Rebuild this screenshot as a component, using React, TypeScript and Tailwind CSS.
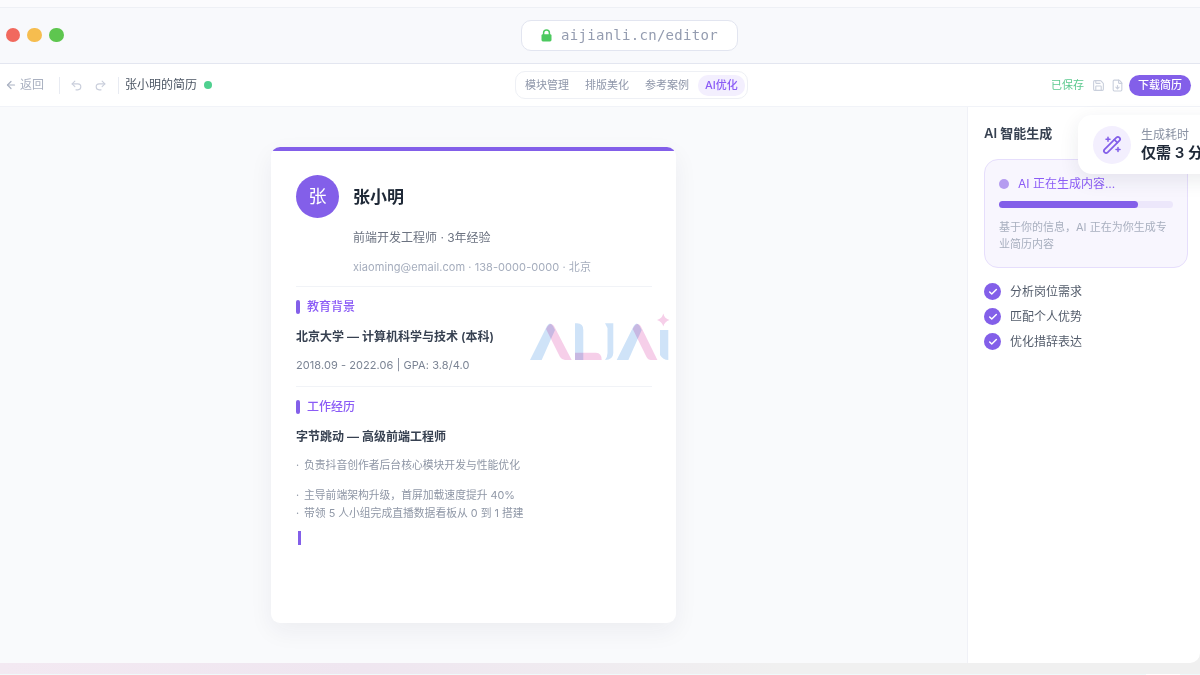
import React from "react";
import { ArrowLeft, Undo2, Redo2, Save, FileDown, Check } from "lucide-react";

const Logo = () => (
  <svg width="140" height="53" viewBox="0 -3 140 53" fill="none">
    <g className="mix-blend-multiply">
      <path d="M0 45 L17 11 Q20 6 23 11 L25 15 L11.7 45 Z" fill="#cfe3f8" />
      <path d="M16 14 Q20 6 24 11 L41.7 45 H35 Q32 45 30 42 Z" fill="#f6cfe9" className="mix-blend-multiply" />
      <path d="M45 8.3 H47 Q53.3 8.3 53.3 15 V45 H45 Z" fill="#cfe3f8" />
      <path d="M45 37.7 H66 Q71.7 38 71.7 45 H45 Z" fill="#f6cfe9" className="mix-blend-multiply" />
      <path d="M75 8.3 H83.3 V38 Q83 45 75 45 Q77.5 42 77.5 38 V13 Z" fill="#cfe3f8" />
      <path d="M86.7 45 L103.7 11 Q106.7 6 109.7 11 L111.7 15 L98.4 45 Z" fill="#cfe3f8" />
      <path d="M102.7 14 Q106.7 6 110.7 11 L127.4 45 H121 Q118 45 116.5 42 Z" fill="#f6cfe9" className="mix-blend-multiply" />
      <path d="M130 15 H138.3 V45 Q133 45 130 40 Z" fill="#cfe3f8" />
      <path d="M133.3 -1.5 Q134.5 3.5 139.5 5 Q134.5 6.5 133.3 11.5 Q132 6.5 127 5 Q132 3.5 133.3 -1.5 Z" fill="#f6cfe9" />
    </g>
  </svg>
);

const Wand = () => (
  <svg width="22" height="22" viewBox="0 0 22 22" fill="none" stroke="#835fe9" strokeWidth="1.7" strokeLinejoin="round" strokeLinecap="round">
    <rect x="0.5" y="8.8" width="21" height="4.4" rx="2.2" transform="rotate(-45 11 11)" />
    <path d="M13.3 5.6 L16.4 8.7" />
    <path d="M7 3.2 V7.2 M5 5.2 H9" strokeWidth="1.5" />
    <path d="M17 13.4 V17.4 M15 15.4 H19" strokeWidth="1.5" />
  </svg>
);

const LockIcon = () => (
  <svg width="11" height="13" viewBox="0 0 11 13" fill="none">
    <path d="M2.6 6 V3.8 a2.9 2.9 0 0 1 5.8 0 V6" stroke="#4cc95f" strokeWidth="1.5" />
    <rect x="0.5" y="5.2" width="10" height="7.3" rx="1.4" fill="#4cc95f" />
  </svg>
);

const Tab = ({ children, active }: { children: React.ReactNode; active?: boolean }) => (
  <div
    className={
      active
        ? "h-[21px] px-[7px] rounded-[10px] bg-[#f3effe] text-[#8b5cf6] text-[11px] font-medium flex items-center"
        : "h-[21px] px-[7px] text-[#8f97aa] text-[11px] flex items-center"
    }
  >
    {children}
  </div>
);

const Step = ({ label }: { label: string }) => (
  <div className="flex items-center gap-[9px] h-[25px]">
    <div className="w-[17px] h-[17px] rounded-full bg-[#835fe9] flex items-center justify-center">
      <Check size={10} color="#fff" strokeWidth={3.5} />
    </div>
    <span className="text-[12px] text-[#535c6b]">{label}</span>
  </div>
);

const SectionTitle = ({ children }: { children: React.ReactNode }) => (
  <div className="flex items-center gap-[7px] h-[16px]">
    <div className="w-[4px] h-[14px] rounded-[2px] bg-[#835fe9]" />
    <span className="text-[12px] font-medium text-[#8b5cf6]">{children}</span>
  </div>
);

const Bullet = ({ children }: { children: React.ReactNode }) => (
  <div className="flex text-[10.8px] leading-[18px] text-[#8f97a6]">
    <span className="w-[8px] shrink-0">·</span>
    <span>{children}</span>
  </div>
);

export default function App() {
  return (
    <div
      className="relative w-[1200px] h-[675px] overflow-hidden flex flex-col bg-[#fbfbfd] text-[#1f2937]"
      style={{ fontFamily: "Inter, 'Noto Sans CJK SC', sans-serif" }}
    >
      <div className="h-[7px] shrink-0 bg-[#fbfbfd] border-b border-[#eef0f5] box-content" />
      <div className="h-[55px] shrink-0 bg-[#f8f9fc] border-b border-[#e3e6f0] box-content flex items-center relative">
        <div className="flex items-center gap-[7.3px] pl-[5.5px] pb-[1px]">
          <div className="w-[14.5px] h-[14.5px] rounded-full bg-[#f1695e]" />
          <div className="w-[14.5px] h-[14.5px] rounded-full bg-[#f6bd4f]" />
          <div className="w-[14.5px] h-[14.5px] rounded-full bg-[#5ec64f]" />
        </div>
        <div className="absolute left-[521px] top-[12px] w-[217px] h-[31px] rounded-[10px] bg-white border border-[#e2e5f0] flex items-center justify-center gap-[9px]">
          <LockIcon />
          <span className="text-[14px] tracking-[0.02em] text-[#949cb0]" style={{ fontFamily: "'DejaVu Sans Mono', monospace" }}>
            aijianli.cn/editor
          </span>
        </div>
      </div>

      <div className="h-[42px] shrink-0 bg-white border-b border-[#f1f3f8] box-content flex items-center relative">
        <div className="flex items-center pl-[5px]">
          <ArrowLeft size={12} color="#aab1c2" strokeWidth={2.4} />
          <span className="ml-[3px] text-[12px] text-[#a9b0c0]">返回</span>
          <div className="ml-[15px] w-px h-[17px] bg-[#e8ebf2]" />
          <Undo2 size={13} color="#c9cedb" className="ml-[10px]" />
          <Redo2 size={13} color="#c9cedb" className="ml-[11px]" />
          <div className="ml-[11px] w-px h-[17px] bg-[#e8ebf2]" />
          <span className="ml-[6px] text-[12px] text-[#4b5563]">张小明的简历</span>
          <div className="ml-[7px] w-[8px] h-[8px] rounded-full bg-[#4fd08f]" />
        </div>
        <div className="absolute left-[515px] top-[7px] w-[233px] h-[28px] rounded-[10px] border border-[#eef0f5] bg-white flex items-center pl-[2px] gap-[2px]">
          <Tab>模块管理</Tab>
          <Tab>排版美化</Tab>
          <Tab>参考案例</Tab>
          <Tab active>AI优化</Tab>
        </div>
        <div className="ml-auto flex items-center pr-[9px]">
          <span className="text-[11px] text-[#5cc98f]">已保存</span>
          <Save size={13} color="#c9cfdc" className="ml-[8px]" />
          <FileDown size={13} color="#c9cfdc" className="ml-[6px]" />
          <div className="ml-[5px] w-[62px] h-[21px] rounded-full bg-[#835fe9] text-white text-[11px] font-medium flex items-center justify-center">
            下载简历
          </div>
        </div>
      </div>

      <div className="h-[556px] shrink-0 flex bg-[#f0f0f0]">
        <div className="w-[967px] bg-[#f9fafc] pt-[40px] pl-[271px]">
          <div className="relative w-[405px] h-[476px] bg-white rounded-[9px] overflow-hidden shadow-[0_8px_24px_rgba(30,40,70,0.06)]">
            <div className="h-[4px] bg-[#835fe9]" />
            <div className="pl-[25px] pr-[24px] pt-[24px]">
              <div className="flex items-center gap-[14px]">
                <div className="w-[43px] h-[43px] rounded-full bg-[#835fe9] text-white text-[18px] flex items-center justify-center">张</div>
                <span className="pt-[2px] text-[17px] font-semibold text-[#1f2937]">张小明</span>
              </div>
              <div className="pl-[57px] mt-[11px] text-[12px] leading-[18px] text-[#6b7280]">前端开发工程师 · 3年经验</div>
              <div className="pl-[57px] mt-[12px] text-[11px] leading-[16px] tracking-[0.07px] text-[#a5adbd]">xiaoming@email.com · 138-0000-0000 · 北京</div>
              <div className="mt-[11px] h-px bg-[#f1f3f7]" />
              <div className="mt-[12px]"><SectionTitle>教育背景</SectionTitle></div>
              <div className="mt-[13px] text-[12px] leading-[18px] font-semibold text-[#374151]">北京大学 — 计算机科学与技术 (本科)</div>
              <div className="mt-[11px] text-[11px] leading-[16px] tracking-[0.07px] text-[#7b8494]">2018.09 - 2022.06 | GPA: 3.8/4.0</div>
              <div className="mt-[13px] h-px bg-[#f1f3f7]" />
              <div className="mt-[12px]"><SectionTitle>工作经历</SectionTitle></div>
              <div className="mt-[13px] text-[12px] leading-[18px] font-semibold text-[#374151]">字节跳动 — 高级前端工程师</div>
              <div className="mt-[11px]"><Bullet>负责抖音创作者后台核心模块开发与性能优化</Bullet></div>
              <div className="mt-[12px]"><Bullet>主导前端架构升级，首屏加载速度提升 40%</Bullet></div>
              <Bullet>带领 5 人小组完成直播数据看板从 0 到 1 搭建</Bullet>
              <div className="mt-[8px] ml-[2px] w-[3px] h-[14px] bg-[#835fe9]" />
            </div>
            <div className="absolute left-[259px] top-[165px]"><Logo /></div>
          </div>
        </div>
        <div className="flex-1 bg-white border-l border-[#f0f1f7] rounded-br-[10px] pl-[16px] pr-[12px] pt-[18px]">
          <div className="text-[13px] leading-[16px] font-semibold text-[#374151]">AI 智能生成</div>
          <div className="mt-[18px] h-[109px] rounded-[14px] border border-[#e6defc] bg-[#f8f6fe] px-[14px] pt-[16px]">
            <div className="flex items-center gap-[9px]">
              <div className="w-[10px] h-[10px] rounded-full bg-[#b59cf0]" />
              <span className="text-[12px] leading-[16px] text-[#8b5cf6]">AI 正在生成内容...</span>
            </div>
            <div className="mt-[9px] h-[7px] rounded-full bg-[#ece7fb]">
              <div className="h-[7px] w-[80%] rounded-full bg-[#835fe9]" />
            </div>
            <div className="mt-[11px] text-[11px] leading-[17px] text-[#a8afbf]">基于你的信息，AI 正在为你生成专业简历内容</div>
          </div>
          <div className="mt-[11px] flex flex-col">
            <Step label="分析岗位需求" />
            <Step label="匹配个人优势" />
            <Step label="优化措辞表达" />
          </div>
        </div>
      </div>

      <div className="flex-1 border-b border-[#effafa] bg-[linear-gradient(90deg,#f3e9f2_0%,#efe6f0_30%,#f0f0f0_65%,#f0f0f0_100%)]" />
      <div className="absolute left-[1146px] bottom-0 w-[34px] h-px bg-white" />

      <div className="absolute left-[1078px] top-[115px] w-[150px] h-[59px] rounded-[14px] bg-white shadow-[0_6px_20px_rgba(30,40,70,0.09)] flex items-center pl-[15px] gap-[10px]">
        <div className="w-[38px] h-[38px] rounded-full bg-[#f3effe] flex items-center justify-center">
          <Wand />
        </div>
        <div className="flex flex-col">
          <span className="text-[12px] leading-[17px] text-[#8a92a3]">生成耗时</span>
          <span className="text-[15px] leading-[20px] font-semibold text-[#1f2937] whitespace-nowrap">仅需 3 分</span>
        </div>
      </div>
    </div>
  );
}
